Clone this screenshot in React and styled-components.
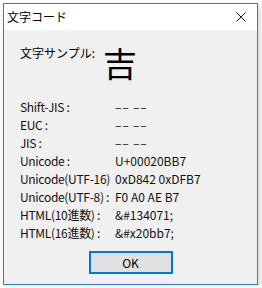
import styled, { createGlobalStyle } from "styled-components";

const GlobalStyle = createGlobalStyle`
	html, body {
		margin: 0;
		padding: 0;
		background: #ffffff;
	}
	body {
		font-family: "Noto Sans CJK JP", "Noto Sans", sans-serif;
		font-size: 12px;
		color: #000000;
	}
`;

const Window = styled.div`
	box-sizing: border-box;
	margin: 3px 0 0 3px;
	width: 255px;
	height: 282px;
	border: 1px solid #1a84d8;
	background: #f0f0f0;
	display: flex;
	flex-direction: column;
	box-shadow: 2px 3px 6px rgba(0, 0, 0, 0.18);
`;

const TitleBar = styled.div`
	height: 26px;
	background: #ffffff;
	display: flex;
	align-items: center;
	justify-content: space-between;
	padding-left: 3px;
	padding-right: 11px;
`;

const Title = styled.span`
	font-size: 12px;
	line-height: 14px;
`;

const Body = styled.div`
	flex: 1;
	display: flex;
	flex-direction: column;
	padding: 14px 0 0 16px;
`;

const Sample = styled.div`
	display: flex;
	align-items: flex-start;
`;

const SampleLabel = styled.span`
	width: 83px;
	line-height: 18px;
`;

const SampleChar = styled.span`
	margin-top: 2px;
	font-size: 34px;
	line-height: 34px;
`;

const Table = styled.div`
	margin-top: 18px;
	display: grid;
	grid-template-columns: 95px 1fr;
	grid-auto-rows: 18px;
	align-items: center;
	color: #111111;
`;

const Label = styled.span`
	white-space: pre;
	line-height: 18px;
	letter-spacing: -0.3px;
`;

const Value = styled.span`
	white-space: pre;
	line-height: 18px;
	letter-spacing: ${(p) => (p.$wide ? "0.8px" : "0")};
`;

const Footer = styled.div`
	display: flex;
	justify-content: center;
	margin-top: 9px;
	margin-left: -16px;
`;

const Button = styled.button`
	box-sizing: border-box;
	width: 84px;
	height: 23px;
	border: 2px solid #0078d7;
	background: #e1e1e1;
	font-family: "Noto Sans CJK JP", "Noto Sans", sans-serif;
	font-size: 12px;
	color: #000000;
	padding: 0;
`;

const rows = [
	["Shift-JIS :", "–– ––", true],
	["EUC :", "–– ––", true],
	["JIS :", "–– ––", true],
	["Unicode :", "U+00020BB7"],
	["Unicode(UTF-16)", "0xD842 0xDFB7"],
	["Unicode(UTF-8) :", "F0 A0 AE B7"],
	["HTML(10進数) :", "&#134071;"],
	["HTML(16進数) :", "&#x20bb7;"],
];

const CloseIcon = () => (
	<svg width="10" height="10" viewBox="0 0 10 10">
		<path d="M0.5 0.5 L9.5 9.5 M9.5 0.5 L0.5 9.5" stroke="#1a1a1a" strokeWidth="1" fill="none" />
	</svg>
);

const App = () => (
	<>
		<GlobalStyle />
		<Window>
			<TitleBar>
				<Title>文字コード</Title>
				<CloseIcon />
			</TitleBar>
			<Body>
				<Sample>
					<SampleLabel>文字サンプル:</SampleLabel>
					<SampleChar>吉</SampleChar>
				</Sample>
				<Table>
					{rows.map(([label, value, wide]) => [
						<Label key={label}>{label}</Label>,
						<Value key={label + "v"} $wide={wide}>
							{value}
						</Value>,
					])}
				</Table>
				<Footer>
					<Button>OK</Button>
				</Footer>
			</Body>
		</Window>
	</>
);

export default App;
